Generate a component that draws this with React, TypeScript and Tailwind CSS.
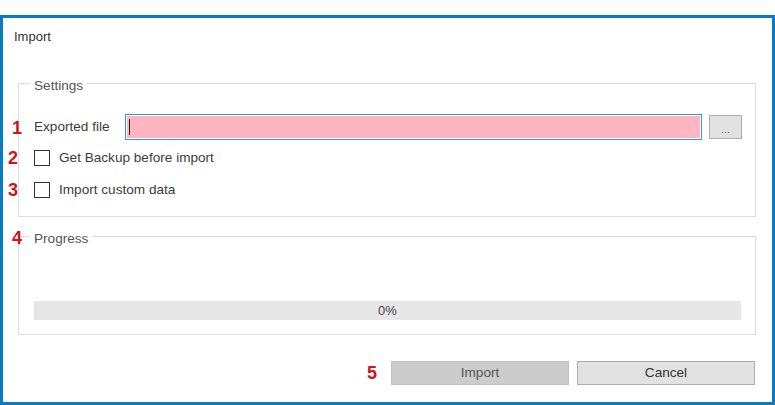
const font = { fontFamily: '"Liberation Sans", Arial, sans-serif' };

function Badge({ n, className }: { n: string; className: string }) {
  return (
    <span
      className={`absolute text-[18px] font-bold leading-[20px] text-[#c8161e] ${className}`}
    >
      {n}
    </span>
  );
}

function CheckRow({ n, label, className }: { n: string; label: string; className: string }) {
  return (
    <label className={`relative flex h-[20px] items-center ${className}`}>
      <Badge n={n} className="left-[-22px] top-0" />
      <span className="ml-[4px] h-[16px] w-[16px] border border-[#333333] bg-white" />
      <span className="ml-[9px] text-[13.6px] text-[#3c3c3c]">{label}</span>
    </label>
  );
}

export default function App() {
  return (
    <div className="h-[405px] w-[775px] bg-white" style={font}>
      <div className="mt-[15px] flex h-[390px] flex-col border-[3px] border-[#0b7bc1] bg-white">
        <div className="pl-[11px] pt-[12px] text-[13px] leading-[14px] text-[#333333]">Import</div>

        <fieldset className="ml-[15px] mr-[16px] mt-[29px] border border-[#dcdcdc] px-[11px] pb-[16px] pt-[21px]">
          <legend className="px-[4px] pt-[6px] text-[13.6px] leading-[14px] text-[#555555]">Settings</legend>

          <div className="relative flex h-[26px] items-center">
            <Badge n="1" className="left-[-18px] top-[4px]" />
            <span className="w-[95px] pl-[4px] text-[13.6px] text-[#3c3c3c]">Exported file</span>
            <div className="flex h-[26px] w-[577px] items-center border border-[#3d8fd6] bg-white p-[1px]">
              <div className="flex h-full w-full items-center bg-[#ffb6c1] pl-[2px]">
                <span className="h-[16px] w-[1px] bg-[#222222]" />
              </div>
            </div>
            <button className="ml-[7px] flex h-[24px] w-[33px] items-end justify-center border border-[#adadad] bg-[#e1e1e1] pb-[4px] text-[11px] leading-[10px] text-[#666666]">
              ...
            </button>
          </div>

          <CheckRow n="2" label="Get Backup before import" className="mt-[8px]" />
          <CheckRow n="3" label="Import custom data" className="mt-[12px]" />
        </fieldset>

        <fieldset className="relative ml-[15px] mr-[16px] mt-[9px] border border-[#dcdcdc] px-[11px] pb-[14px] pt-[55px]">
          <legend className="relative px-[4px] pt-[6px] text-[13.6px] leading-[14px] text-[#555555]">
            <Badge n="4" className="left-[-18px] top-[2px]" />
            Progress
          </legend>
          <div className="ml-[4px] mr-[3px] flex h-[19px] items-center justify-center bg-[#e6e6e6] text-[13px] text-[#444444]">
            0%
          </div>
        </fieldset>

        <div className="mr-[17px] mt-[26px] flex items-center justify-end">
          <span className="mr-[14px] text-[18px] font-bold leading-[20px] text-[#c8161e]">5</span>
          <button className="h-[24px] w-[178px] border border-[#bfbfbf] bg-[#cccccc] text-[13.6px] text-[#555555]">
            Import
          </button>
          <button className="ml-[8px] h-[24px] w-[178px] border border-[#adadad] bg-[#e1e1e1] text-[13.6px] text-[#333333]">
            Cancel
          </button>
        </div>
      </div>
    </div>
  );
}
